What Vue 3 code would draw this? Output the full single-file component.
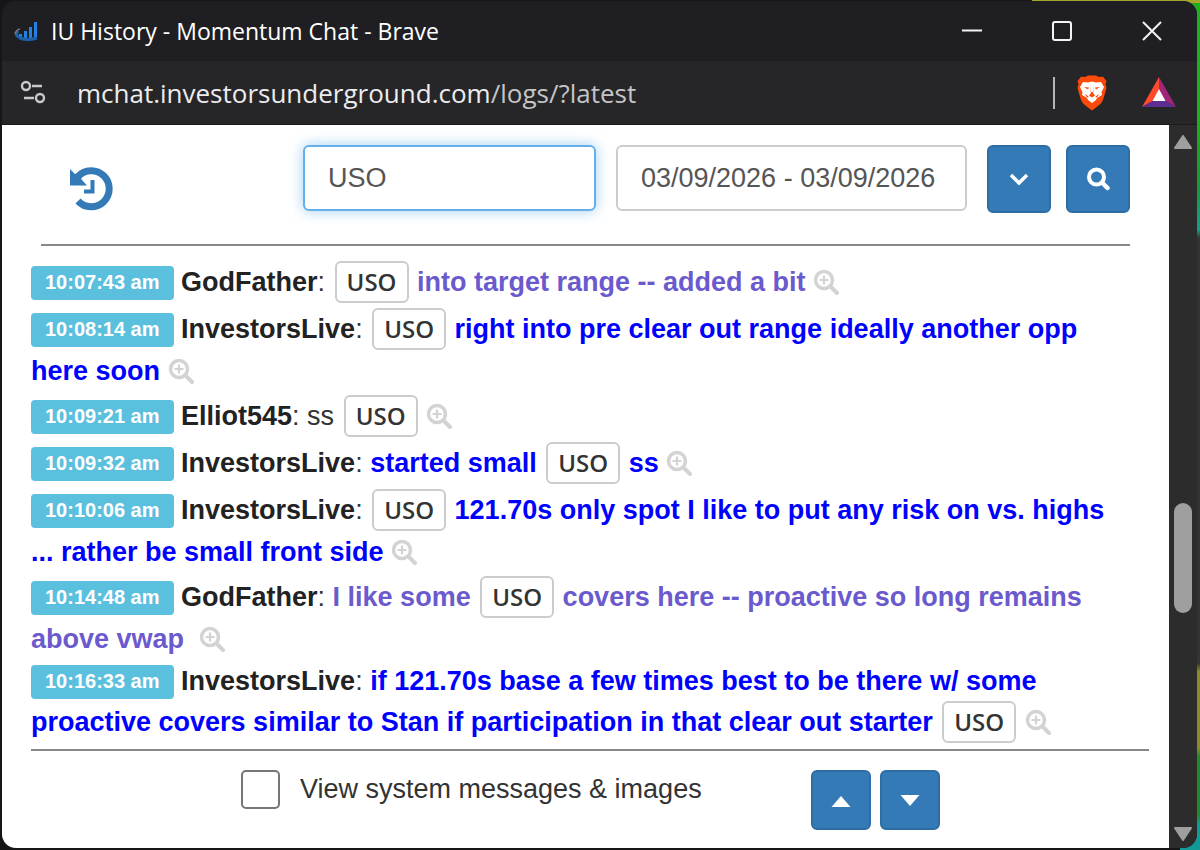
<script setup>
import { ref } from "vue";

const query = ref("USO");
const dateRange = ref("03/09/2026 - 03/09/2026");
const showSystem = ref(false);

// parts with ticker: true are drawn as a boxed symbol
const messages = [
  {
    time: "10:07:43 am",
    user: "GodFather",
    tone: "purple",
    parts: [{ text: "USO", ticker: true }, { text: "into target range -- added a bit" }],
  },
  {
    time: "10:08:14 am",
    user: "InvestorsLive",
    tone: "blue",
    parts: [
      { text: "USO", ticker: true },
      { text: "right into pre clear out range ideally another opp here soon" },
    ],
  },
  {
    time: "10:09:21 am",
    user: "Elliot545",
    tone: "plain",
    parts: [{ text: "ss" }, { text: "USO", ticker: true }],
  },
  {
    time: "10:09:32 am",
    user: "InvestorsLive",
    tone: "blue",
    parts: [{ text: "started small" }, { text: "USO", ticker: true }, { text: "ss" }],
  },
  {
    time: "10:10:06 am",
    user: "InvestorsLive",
    tone: "blue",
    parts: [
      { text: "USO", ticker: true },
      { text: "121.70s only spot I like to put any risk on vs. highs ... rather be small front side" },
    ],
  },
  {
    time: "10:14:48 am",
    user: "GodFather",
    tone: "purple",
    parts: [
      { text: "I like some" },
      { text: "USO", ticker: true },
      { text: "covers here -- proactive so long remains above vwap\u00a0" },
    ],
  },
  {
    time: "10:16:33 am",
    user: "InvestorsLive",
    tone: "blue",
    tight: true,
    parts: [
      {
        text: "if 121.70s base a few times best to be there w/ some proactive covers similar to Stan if participation in that clear out starter",
      },
      { text: "USO", ticker: true },
    ],
  },
];
</script>

<template>
  <div class="desktop">
    <div class="window">
      <header class="titlebar">
        <svg class="app-icon" viewBox="0 0 24 20" aria-hidden="true">
          <g fill="#2483e2">
            <rect x="5" y="13" width="3" height="5" />
            <rect x="10" y="10" width="3" height="9" />
            <rect x="15" y="6" width="3" height="13" />
            <rect x="20" y="1" width="3" height="17" />
          </g>
          <path d="M4 10 Q0 14 6 17 Q13 20 23 17" fill="none" stroke="#1b62ab" stroke-width="3" />
          <path d="M6 8 Q2 9 1 13" fill="none" stroke="#777" stroke-width="1.5" />
        </svg>
        <h1 class="window-title">IU History - Momentum Chat - Brave</h1>
        <div class="window-controls">
          <button type="button" aria-label="Minimize">
            <svg viewBox="0 0 22 22"><path d="M1 10.5H21" /></svg>
          </button>
          <button type="button" aria-label="Maximize">
            <svg viewBox="0 0 22 22"><rect x="2" y="2" width="18" height="18" rx="2" /></svg>
          </button>
          <button type="button" aria-label="Close">
            <svg viewBox="0 0 22 22"><path d="M2 2L20 20M20 2L2 20" /></svg>
          </button>
        </div>
      </header>

      <div class="addressbar">
        <button type="button" class="bar-button" aria-label="Site settings">
          <svg class="site-icon" viewBox="0 0 26 26">
            <g fill="none" stroke="#c9c9cc" stroke-width="2.4">
              <circle cx="6" cy="6" r="4" />
              <path d="M12 6H22M4 18H14" />
              <circle cx="20" cy="18" r="4" />
            </g>
          </svg>
        </button>
        <span class="url"><span class="host">mchat.investorsunderground.com</span>/logs/?latest</span>
        <div class="extensions">
          <button type="button" class="bar-button" aria-label="Brave Shields">
            <svg class="shield-icon" viewBox="0 0 32 36">
              <path
                d="M9 2L12 .5H20L23 2L27 1.8L30.5 6L29.5 9L30.5 13L27 25Q26 28 22 31L16 35.5L10 31Q6 28 5 25L1.5 13L2.5 9L1.5 6L5 1.8Z"
                fill="#fb4b0c"
              />
              <path
                d="M7 7L12 7.5L16 6.5L20 7.5L25 7L28 12L25.5 17L26 20L21 23L20 25L16 28L12 25L11 23L6 20L6.5 17L4 12Z"
                fill="#fff"
              />
              <path
                d="M8 12L13 12.5L12 14.5Z M24 12L19 12.5L20 14.5Z M14 10L15 18L13 20.5L16 22.5L19 20.5L17 18L18 10L17.5 17H14.5Z M8.5 18.5L13 22L11 22.5Z M23.5 18.5L19 22L21 22.5Z"
                fill="#fb4b0c"
              />
            </svg>
          </button>
          <button type="button" class="bar-button" aria-label="Brave Rewards">
            <svg class="bat-icon" viewBox="0 0 34 31">
              <path d="M17 0L0 30L11.5 23.5L17 13Z" fill="#ff4b2b" />
              <path d="M17 0L34 30L22.5 23.5L17 13Z" fill="#a0257b" />
              <path d="M0 30H34L22.5 23.5H11.5Z" fill="#5e2d91" />
              <path d="M17 12L23.5 24H10.5Z" fill="#fff" />
            </svg>
          </button>
        </div>
      </div>

      <div class="body">
        <main class="page">
          <form class="filters" @submit.prevent>
            <a href="#" class="history-link" aria-label="History">
              <svg viewBox="0 0 44 44">
                <path d="M9 9.5A18 18 0 1 1 9 34" fill="none" stroke="#337ab7" stroke-width="7" />
                <path d="M1 2L6 7H10L13 13L18 18.5H1Z" fill="#337ab7" />
                <path d="M23.5 13V24.5H15" fill="none" stroke="#337ab7" stroke-width="4" />
              </svg>
            </a>
            <input v-model="query" type="text" class="field search" aria-label="Search term" />
            <input v-model="dateRange" type="text" class="field dates" aria-label="Date range" />
            <button type="button" class="btn drop" aria-label="More options">
              <svg viewBox="0 0 24 24">
                <path d="M4 8L12 16L20 8" fill="none" stroke="#fff" stroke-width="3.5" />
              </svg>
            </button>
            <button type="submit" class="btn find" aria-label="Search">
              <svg viewBox="0 0 24 24" fill="none" stroke="#fff">
                <circle cx="10.5" cy="10" r="7.5" stroke-width="4" />
                <path d="M16 15.5L21.5 21" stroke-width="4.5" stroke-linecap="round" />
              </svg>
            </button>
          </form>

          <div class="messages">
            <p
              v-for="message in messages"
              :key="message.time"
              class="message"
              :class="[message.tone, { tight: message.tight }]"
            >
              <span class="time">{{ message.time }}</span>
              {{ " " }}<b class="user">{{ message.user }}</b>:
              <template v-for="(part, i) in message.parts" :key="i">
                <span :class="part.ticker ? 'ticker' : 'text'">{{ part.text }}</span>{{ " " }}
              </template>
              <a href="#" class="zoom" aria-label="Show in context">
                <svg viewBox="0 0 26 26" fill="none" stroke="#d3d3d3">
                  <circle cx="11" cy="11" r="8.5" stroke-width="3.5" />
                  <path d="M11 6.5V15.5M6.5 11H15.5" stroke-width="2.2" />
                  <path d="M17.5 17.5L24 24" stroke-width="4" stroke-linecap="round" />
                </svg>
              </a>
            </p>
          </div>

          <footer class="footer">
            <label class="toggle">
              <input v-model="showSystem" type="checkbox" />
              View system messages &amp; images
            </label>
            <div class="pager">
              <button type="button" class="btn" aria-label="Scroll up">
                <svg viewBox="0 0 24 24"><path d="M12 8L21.5 19H2.5Z" fill="#fff" /></svg>
              </button>
              <button type="button" class="btn" aria-label="Scroll down">
                <svg viewBox="0 0 24 24"><path d="M12 18L21.5 7H2.5Z" fill="#fff" /></svg>
              </button>
            </div>
          </footer>
        </main>

        <div class="scrollbar" aria-hidden="true">
          <svg viewBox="0 0 18 14"><path d="M9 1L17 13H1Z" /></svg>
          <div class="track"><div class="thumb"></div></div>
          <svg viewBox="0 0 18 14"><path d="M9 13L17 1H1Z" /></svg>
        </div>
      </div>
    </div>
  </div>
</template>

<style>
body {
  margin: 0;
  background: #161616;
}
</style>

<style scoped>
* {
  box-sizing: border-box;
}

.desktop {
  display: flex;
  min-height: 100vh;
  padding: 1px 3px 2px 2px;
  font-family: "Liberation Sans", Arial, sans-serif;
  font-size: 27px;
  color: #333;
  background:
    linear-gradient(90deg, transparent 86%, #a5a52c 86%) top / 100% 3px no-repeat,
    linear-gradient(#1fae1f 0 14%, #159a35 22%, #1a9c8c 27%, #333 28% 78%, #8c8a24 79% 88%, #23892f 89% 96%, #129a96 97%)
      right / 20px 100% no-repeat,
    #161616;
}

.window {
  flex: 1;
  min-width: 0;
  display: flex;
  flex-direction: column;
  border-radius: 14px;
  overflow: hidden;
  background: #262629;
}

button {
  font: inherit;
  cursor: pointer;
}

svg {
  display: block;
}

.titlebar {
  display: flex;
  align-items: center;
  height: 60px;
  padding-left: 12px;
  background: #1f1f23;
}

.app-icon {
  width: 24px;
  height: 20px;
}

.window-title {
  flex: 1;
  min-width: 0;
  margin: 0 0 0 13px;
  font-family: "Open Sans", "Noto Sans", sans-serif;
  font-size: 23px;
  font-weight: 400;
  line-height: 32px;
  color: #fff;
  white-space: nowrap;
  overflow: hidden;
}

.window-controls {
  display: flex;
}

.window-controls button {
  display: grid;
  place-items: center;
  width: 90px;
  height: 60px;
  padding: 0;
  border: 0;
  background: none;
}

.window-controls svg {
  width: 22px;
  height: 22px;
  fill: none;
  stroke: #f4f4f4;
  stroke-width: 2;
}

.addressbar {
  display: flex;
  align-items: center;
  height: 64px;
  padding: 0 21px 0 18px;
  border-bottom: 1px solid #1b1b1d;
}

.bar-button {
  padding: 0;
  border: 0;
  background: none;
}

.site-icon {
  width: 26px;
  height: 26px;
}

.url {
  flex: 1;
  min-width: 0;
  margin-left: 31px;
  font-family: "Open Sans", "Noto Sans", sans-serif;
  font-size: 26px;
  line-height: 36px;
  color: #c4c4c6;
  white-space: nowrap;
  overflow: hidden;
}

.host {
  color: #ececee;
}

.extensions {
  display: flex;
  align-items: center;
  gap: 34px;
  height: 32px;
  padding-left: 21px;
  border-left: 2px solid #b5b5b5;
}

.shield-icon {
  width: 32px;
  height: 36px;
}

.bat-icon {
  width: 34px;
  height: 31px;
}

.body {
  flex: 1;
  display: flex;
}

.page {
  flex: 1;
  min-width: 0;
  display: flex;
  flex-direction: column;
  background: #fff;
}

.filters {
  display: flex;
  align-items: flex-start;
  margin: 0 39px;
  padding: 20px 0 31px;
  border-bottom: 2px solid #888;
}

.history-link {
  margin: 22px auto 0 28px;
}

.history-link svg {
  width: 44px;
  height: 44px;
}

.field {
  min-width: 0;
  height: 66px;
  padding: 0 23px;
  border: 2px solid #ccc;
  border-radius: 6px;
  font: inherit;
  color: #555;
  background: #fff;
  outline: none;
}

.search {
  flex: 0 1 293px;
  border-color: #66afe9;
  box-shadow: 0 0 14px rgba(102, 175, 233, 0.6);
}

.dates {
  flex: 0 1 351px;
  margin-left: 20px;
}

.btn {
  display: grid;
  place-items: center;
  width: 60px;
  height: 60px;
  padding: 0;
  border: 2px solid #2e6da4;
  border-radius: 6px;
  background: #337ab7;
}

.btn svg {
  width: 24px;
  height: 24px;
}

.drop,
.find {
  width: 64px;
  height: 68px;
}

.drop {
  margin-left: 20px;
}

.find {
  margin-left: 15px;
}

.messages {
  flex: 1;
  margin: 0 20px 0 29px;
  padding: 11px 24px 0 0;
  border-bottom: 2px solid #888;
}

.message {
  margin: 0;
  line-height: 40px;
}

.time {
  display: inline-block;
  height: 34px;
  margin-top: 6px;
  padding: 0 14px;
  border-radius: 4px;
  font-size: 20px;
  font-weight: 700;
  line-height: 33px;
  color: #fff;
  background: #5bc0de;
  vertical-align: 2px;
}

.user {
  color: #222;
}

.purple .text {
  font-weight: 700;
  color: #6a5acd;
}

.blue .text {
  font-weight: 700;
  color: #0000ff;
}

.ticker {
  display: inline-block;
  height: 42px;
  margin: 4px 1px 1px 2px;
  padding: 0 10px;
  border: 2px solid #ccc;
  border-radius: 6px;
  font-family: "Open Sans", "Noto Sans", sans-serif;
  font-size: 24px;
  font-weight: 600;
  line-height: 38px;
  color: #333;
}

.tight .ticker {
  margin-top: 0;
}

.zoom {
  display: inline-block;
  line-height: 26px;
  vertical-align: -4px;
}

.zoom svg {
  width: 26px;
  height: 26px;
}

.footer {
  display: flex;
  align-items: flex-start;
  justify-content: space-between;
  padding: 19px 229px 18px 239px;
}

.toggle {
  display: flex;
  align-items: center;
  gap: 20px;
  line-height: 39px;
}

.toggle input {
  appearance: none;
  width: 39px;
  height: 39px;
  margin: 0;
  border: 2px solid #767676;
  border-radius: 5px;
  background: #fff;
}

.toggle input:checked {
  background: #337ab7;
}

.pager {
  display: flex;
  gap: 9px;
}

.scrollbar {
  display: flex;
  flex-direction: column;
  align-items: center;
  gap: 10px;
  width: 28px;
  padding: 10px 0 7px;
  background: #2c2c2c;
}

.scrollbar svg {
  width: 18px;
  height: 14px;
  fill: #9f9f9f;
  stroke: #9f9f9f;
  stroke-width: 2;
  stroke-linejoin: round;
}

.track {
  flex: 1;
  display: flex;
  flex-direction: column;
  width: 18px;
}

.track::before {
  content: "";
  flex: 343;
}

.track::after {
  content: "";
  flex: 204;
}

.thumb {
  flex: 110;
  border-radius: 9px;
  background: #9f9f9f;
}
</style>
